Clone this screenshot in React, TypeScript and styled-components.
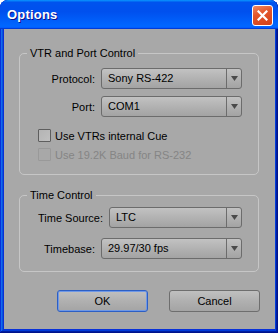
import styled, { createGlobalStyle } from "styled-components";

const GlobalStyle = createGlobalStyle`
  html, body {
    margin: 0;
    padding: 0;
    background: #ffffff;
  }
  body {
    font-family: "Liberation Sans", Arial, sans-serif;
    font-size: 11px;
    color: #000;
  }
`;

function Arrow() {
  return (
    <svg width="7" height="5" viewBox="0 0 7 5">
      <path d="M0 0 H7 L3.5 5 Z" fill="#4a4a4a" />
    </svg>
  );
}

function Dropdown({ value }: { value: string }) {
  return (
    <Select>
      <SelectValue>{value}</SelectValue>
      <SelectArrow>
        <Arrow />
      </SelectArrow>
    </Select>
  );
}

export default function App() {
  return (
    <>
      <GlobalStyle />
      <Window>
        <TitleBar>
          <Title>Options</Title>
          <CloseButton aria-label="Close">
            <svg width="11" height="11" viewBox="0 0 11 11">
              <path d="M1.5 1.5 L9.5 9.5 M9.5 1.5 L1.5 9.5" stroke="#fff" strokeWidth="2.2" strokeLinecap="square" />
            </svg>
          </CloseButton>
        </TitleBar>
        <Body>
          <Group $pad="8px 16px 13px 18px">
            <Legend>VTR and Port Control</Legend>
            <Rows $gap={7}>
              <FieldRow>
                <Label>Protocol:</Label>
                <Dropdown value="Sony RS-422" />
              </FieldRow>
              <FieldRow>
                <Label>Port:</Label>
                <Dropdown value="COM1" />
              </FieldRow>
            </Rows>
            <Checks>
              <CheckRow>
                <Box />
                <span>Use VTRs internal Cue</span>
              </CheckRow>
              <CheckRow $disabled>
                <Box $disabled />
                <span>Use 19.2K Baud for RS-232</span>
              </CheckRow>
            </Checks>
          </Group>
          <Group $pad="5px 16px 12px 18px" $top={13}>
            <Legend>Time Control</Legend>
            <Rows $gap={10}>
              <FieldRow>
                <Label>Time Source:</Label>
                <Dropdown value="LTC" />
              </FieldRow>
              <FieldRow>
                <Label>Timebase:</Label>
                <Dropdown value="29.97/30 fps" />
              </FieldRow>
            </Rows>
          </Group>
          <Buttons>
            <Button $focused>OK</Button>
            <Button>Cancel</Button>
          </Buttons>
        </Body>
      </Window>
    </>
  );
}

const Window = styled.div`
  width: 278px;
  height: 333px;
  display: flex;
  flex-direction: column;
  background: #0831d9;
  border-radius: 8px 8px 0 0;
  box-shadow: inset -1px -1px #00138c, inset 1px 1px #0831d9, inset -2px -2px #001ea0,
    inset 2px 2px #166aee, inset -3px -3px #003bda, inset 3px 3px #0855dd;
  overflow: hidden;
`;

const TitleBar = styled.div`
  height: 29px;
  flex-shrink: 0;
  display: flex;
  align-items: center;
  justify-content: space-between;
  padding: 0 5px 0 7px;
  background: linear-gradient(
    180deg,
    #0997ff,
    #0053ee 8%,
    #0050ee 40%,
    #0066ff 88%,
    #0066ff 93%,
    #005bff 95%,
    #003dd7 96%,
    #003dd7
  );
  border-radius: 8px 8px 0 0;
`;

const Title = styled.span`
  font-family: "Liberation Sans", Arial, sans-serif;
  font-weight: bold;
  font-size: 13px;
  color: #fff;
  text-shadow: 1px 1px #0f1089;
  letter-spacing: 0.2px;
`;

const CloseButton = styled.div`
  width: 21px;
  height: 21px;
  box-sizing: border-box;
  border: 1px solid #fff;
  border-radius: 3px;
  display: flex;
  align-items: center;
  justify-content: center;
  background: linear-gradient(160deg, #f08a63 0%, #e3562b 40%, #d2411a 100%);
  margin-top: 1px;
`;

const Body = styled.div`
  flex: 1;
  margin: 0 3px 4px 4px;
  background: #a8a8a8;
  padding: 17px 16px 0 15px;
  display: flex;
  flex-direction: column;
`;

const Group = styled.fieldset<{ $pad: string; $top?: number }>`
  margin: ${(p) => p.$top ?? 0}px 0 0 0;
  padding: ${(p) => p.$pad};
  border: 1px solid #c6c6c6;
  border-radius: 5px;
  min-width: 0;
`;

const Legend = styled.legend`
  padding: 0 3px;
  margin-left: -11px;
  line-height: 14px;
  font-size: 11px;
`;

const Rows = styled.div<{ $gap: number }>`
  display: flex;
  flex-direction: column;
  gap: ${(p) => p.$gap}px;
`;

const FieldRow = styled.div`
  display: flex;
  align-items: center;
  justify-content: flex-end;
  gap: 6px;
`;

const Label = styled.span`
  white-space: nowrap;
`;

const Select = styled.div`
  width: 141px;
  height: 21px;
  box-sizing: border-box;
  display: flex;
  border: 1px solid #6c6c6c;
  border-radius: 3px;
  background: linear-gradient(180deg, #c2c2c2 0%, #b2b2b2 50%, #a3a3a3 100%);
`;

const SelectValue = styled.span`
  flex: 1;
  padding-left: 6px;
  line-height: 19px;
`;

const SelectArrow = styled.span`
  width: 14px;
  border-left: 1px solid #6c6c6c;
  display: flex;
  align-items: center;
  justify-content: center;
`;

const Checks = styled.div`
  margin-top: 12px;
  display: flex;
  flex-direction: column;
  gap: 6px;
`;

const CheckRow = styled.label<{ $disabled?: boolean }>`
  display: flex;
  align-items: center;
  gap: 4px;
  height: 13px;
  color: ${(p) => (p.$disabled ? "#858585" : "#000")};
`;

const Box = styled.span<{ $disabled?: boolean }>`
  width: 13px;
  height: 13px;
  box-sizing: border-box;
  border: 1px solid ${(p) => (p.$disabled ? "#999" : "#5e5e5e")};
  border-radius: 1px;
  background: ${(p) =>
    p.$disabled ? "#a8a8a8" : "linear-gradient(135deg, #b4b4b4 0%, #c0c0c0 100%)"};
`;

const Buttons = styled.div`
  margin-top: 18px;
  display: flex;
  justify-content: flex-end;
  gap: 21px;
  margin-right: -1px;
`;

const Button = styled.button<{ $focused?: boolean }>`
  width: 91px;
  height: 22px;
  box-sizing: border-box;
  font-family: "Liberation Sans", Arial, sans-serif;
  font-size: 11px;
  color: #000;
  border: 1px solid ${(p) => (p.$focused ? "#2d5fc4" : "#6e6e6e")};
  border-radius: 3px;
  background: linear-gradient(180deg, #c0c0c0 0%, #b0b0b0 50%, #a4a4a4 100%);
  box-shadow: ${(p) => (p.$focused ? "inset 0 0 0 1px #6f98e6" : "none")};
  padding: 0;
`;
